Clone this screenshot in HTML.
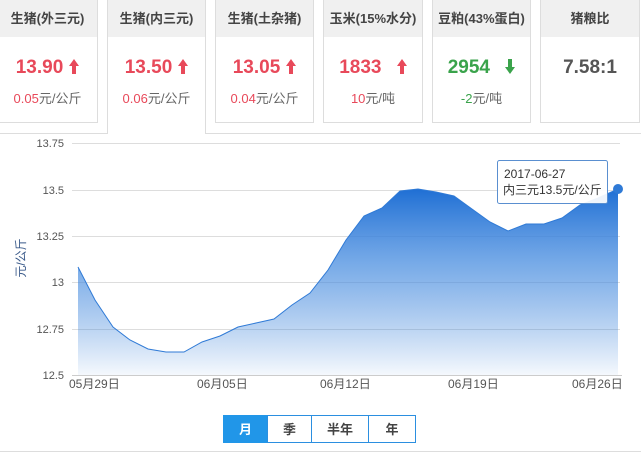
<!DOCTYPE html><html><head><meta charset="utf-8"><style>
body{margin:0;width:641px;height:456px;overflow:hidden;background:#fff;font-family:"Liberation Sans","Noto Sans CJK SC",sans-serif;position:relative}
.c{position:absolute;top:0;height:123px;border:1px solid #ddd;border-top:none;box-sizing:border-box;text-align:center}
.h{height:37px;background:#f0f0f0;line-height:37px;font-size:13px;font-weight:bold;color:#444}
.v{font-size:19px;font-weight:bold;margin-top:19px;height:24px;line-height:24px}
.v svg{vertical-align:-1px;margin-left:6px}
.s{font-size:13px;margin-top:8px;color:#666}
.r{color:#e8495a}.g{color:#3aa34b}
.ab{position:absolute;background:#ddd}
.b{position:absolute;top:415px;height:28px;line-height:28px;text-align:center;font-size:13px;font-weight:bold;color:#444;border:1px solid #2b8fe0;box-sizing:border-box}
</style></head><body>
<div class="c" style="left:-3px;width:101px"><div class="h">生猪(外三元)</div><div class="v r">13.90<svg width="10" height="15"><path d="M5 0L10 7H7V15H3V7H0Z" fill="#e8495a"/></svg></div><div class="s"><span class="r">0.05</span>元/公斤</div></div>
<div class="c" style="left:107px;width:99px;height:134px;border-bottom:none"><div class="h">生猪(内三元)</div><div class="v r">13.50<svg width="10" height="15"><path d="M5 0L10 7H7V15H3V7H0Z" fill="#e8495a"/></svg></div><div class="s"><span class="r">0.06</span>元/公斤</div></div>
<div class="c" style="left:215px;width:99px"><div class="h">生猪(土杂猪)</div><div class="v r">13.05<svg width="10" height="15"><path d="M5 0L10 7H7V15H3V7H0Z" fill="#e8495a"/></svg></div><div class="s"><span class="r">0.04</span>元/公斤</div></div>
<div class="c" style="left:323px;width:100px"><div class="h">玉米(15%水分)</div><div class="v r">1833 <svg width="10" height="15" style="margin-left:10px"><path d="M5 0L10 7H7V15H3V7H0Z" fill="#e8495a"/></svg></div><div class="s"><span class="r">10</span>元/吨</div></div>
<div class="c" style="left:432px;width:99px"><div class="h">豆粕(43%蛋白)</div><div class="v g">2954 <svg width="10" height="15" style="margin-left:10px"><path d="M5 15L10 8H7V0H3V8H0Z" fill="#3aa34b"/></svg></div><div class="s"><span class="g">-2</span>元/吨</div></div>
<div class="c" style="left:540px;width:100px"><div class="h">猪粮比</div><div class="v" style="color:#555">7.58:1</div></div>
<div class="ab" style="left:0;top:133px;width:107px;height:1px"></div>
<div class="ab" style="left:205px;top:133px;width:436px;height:1px"></div>
<svg style="position:absolute;left:0;top:0" width="641" height="456">
<defs><linearGradient id="gr" x1="0" y1="0" x2="0" y2="1"><stop offset="0" stop-color="#1f6fd4"/><stop offset="0.4" stop-color="#4a8ee0" stop-opacity="0.75"/><stop offset="1" stop-color="#2f7ad6" stop-opacity="0.05"/></linearGradient></defs>
<g stroke="#ddd" stroke-width="1">
<line x1="72" y1="143.5" x2="620" y2="143.5"/><line x1="72" y1="190.5" x2="620" y2="190.5"/><line x1="72" y1="236.5" x2="620" y2="236.5"/><line x1="72" y1="282.5" x2="620" y2="282.5"/><line x1="72" y1="329.5" x2="620" y2="329.5"/></g>
<path d="M78,267 L95,300 113,327 130,340 148,349 166,352 184,352 202,342 220,336 238,327 256,323 274,319 292,305 310,293 328,270 346,240 364,216 382,208 400,191 418,189 436,192 454,196 472,209 490,222 508,231 526,224 544,224 562,218 580,205 598,198 618,189 L618,375 78,375Z" fill="url(#gr)"/>
<path d="M78,267 L95,300 113,327 130,340 148,349 166,352 184,352 202,342 220,336 238,327 256,323 274,319 292,305 310,293 328,270 346,240 364,216 382,208 400,191 418,189 436,192 454,196 472,209 490,222 508,231 526,224 544,224 562,218 580,205 598,198 618,189" fill="none" stroke="#2f7ad6" stroke-width="1"/>
<line x1="72" y1="375.5" x2="622" y2="375.5" stroke="#ccc"/>
<circle cx="618" cy="189" r="5" fill="#2f7ad6"/>
<g font-size="11" fill="#555" text-anchor="end" font-family="Liberation Sans"><text x="64" y="147">13.75</text><text x="64" y="194">13.5</text><text x="64" y="240">13.25</text><text x="64" y="286">13</text><text x="64" y="333">12.75</text><text x="64" y="379">12.5</text></g>
<g font-size="12" fill="#555" font-family="Liberation Sans,Noto Sans CJK SC"><text x="69" y="388">05月29日</text><text x="197" y="388">06月05日</text><text x="320" y="388">06月12日</text><text x="448" y="388">06月19日</text><text x="572" y="388">06月26日</text></g>
<text transform="translate(25,258) rotate(-90)" text-anchor="middle" font-size="12" fill="#3a5a8a">元/公斤</text>
<rect x="497.5" y="160.5" width="110" height="43" rx="2" fill="#fff" fill-opacity="0.92" stroke="#5a8fd0"/>
<text x="504" y="178" font-size="12" fill="#333">2017-06-27</text><text x="503" y="194" font-size="12" fill="#333">内三元13.5元/公斤</text>
</svg>
<div class="b" style="left:223px;width:45px;background:#2196e8;color:#fff;border-color:#2196e8">月</div>
<div class="b" style="left:267px;width:45px">季</div>
<div class="b" style="left:311px;width:58px">半年</div>
<div class="b" style="left:368px;width:48px">年</div>
<div class="ab" style="left:0;top:451px;width:641px;height:1px"></div>
</body></html>
